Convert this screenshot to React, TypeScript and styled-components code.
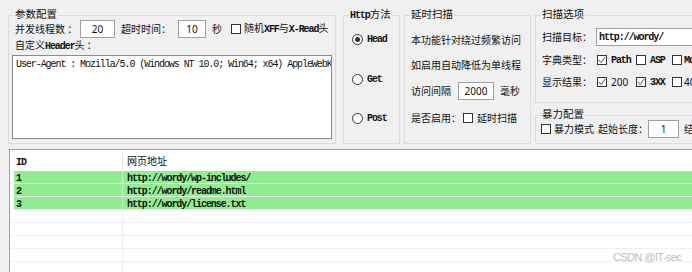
import React from 'react';
import styled, { createGlobalStyle } from 'styled-components';

const GlobalStyle = createGlobalStyle`
  html, body {
    margin: 0;
    padding: 0;
  }
  body {
    background: #f0f0f0;
    font-family: "Noto Sans CJK SC", "Noto Sans", sans-serif;
    font-size: 10px;
    color: #111;
    overflow: hidden;
  }
`;

const Window = styled.div`
  position: relative;
  width: 692px;
  height: 272px;
  overflow: hidden;
  display: flex;
  flex-direction: column;
`;

const TopPanel = styled.div`
  display: flex;
  align-items: stretch;
  height: 136px;
  padding: 8px 0 0 8px;
  flex-shrink: 0;
`;

const Group = styled.div<{ $w?: number; $h?: number; $ml?: number; $mt?: number; $pl?: number; $grow?: boolean }>`
  position: relative;
  box-sizing: border-box;
  display: flex;
  flex-direction: column;
  flex-shrink: 0;
  ${(p) => (p.$w ? `width: ${p.$w}px;` : '')}
  ${(p) => (p.$h ? `height: ${p.$h}px;` : '')}
  ${(p) => (p.$grow ? 'flex: 1;' : '')}
  margin-left: ${(p) => p.$ml ?? 0}px;
  margin-top: ${(p) => p.$mt ?? 7}px;
  padding-left: ${(p) => p.$pl ?? 6}px;
  border: 1px solid #dcdcdc;
`;

const Legend = styled.span`
  position: absolute;
  top: -8px;
  left: 5px;
  padding: 0 1px;
  background: #f0f0f0;
  font-size: 10.5px;
  line-height: 12px;
  white-space: nowrap;
`;

const Column = styled.div<{ $ml: number }>`
  display: flex;
  flex-direction: column;
  width: 170px;
  margin-left: ${(p) => p.$ml}px;
  flex-shrink: 0;
`;

const Row = styled.div<{ $mt?: number; $h?: number }>`
  display: flex;
  align-items: center;
  height: ${(p) => p.$h ?? 14}px;
  margin-top: ${(p) => p.$mt ?? 0}px;
  flex-shrink: 0;
`;

const Label = styled.span<{ $w?: number; $ml?: number }>`
  display: inline-block;
  flex-shrink: 0;
  white-space: nowrap;
  line-height: 14px;
  ${(p) => (p.$w ? `width: ${p.$w}px;` : '')}
  margin-left: ${(p) => p.$ml ?? 0}px;
`;

const Latin = styled.span`
  font-family: "Liberation Mono", monospace;
  font-size: 10px;
  font-weight: bold;
  letter-spacing: -1.07px;
`;

const Digits = styled.span`
  font-family: "Noto Sans", sans-serif;
  font-size: 10px;
`;

const TextBox = styled.input<{ $w: number; $left?: boolean; $mono?: boolean }>`
  box-sizing: border-box;
  flex-shrink: 0;
  width: ${(p) => p.$w}px;
  height: 18px;
  margin: 0;
  padding: 0 ${(p) => (p.$left ? 2 : 0)}px;
  border: 1px solid #a0a0a0;
  background: #fff;
  color: #111;
  outline: none;
  text-align: ${(p) => (p.$left ? 'left' : 'center')};
  font-family: ${(p) => (p.$mono ? '"Liberation Mono", monospace' : '"Noto Sans", sans-serif')};
  font-weight: ${(p) => (p.$mono ? 'bold' : 'normal')};
  font-size: 10px;
  letter-spacing: ${(p) => (p.$mono ? '-1.07px' : '0')};
`;

const HeaderArea = styled.textarea`
  box-sizing: border-box;
  width: 320px;
  height: 84px;
  margin: 2px 0 0 -3px;
  padding: 3px 3px;
  border: 1px solid #8c8c8c;
  background: #fff;
  color: #111;
  resize: none;
  overflow: hidden;
  white-space: pre;
  outline: none;
  font-family: "Liberation Mono", monospace;
  font-size: 10px;
  letter-spacing: -1.07px;
  line-height: 12px;
`;

const Box = styled.span<{ $ml?: number }>`
  box-sizing: border-box;
  display: inline-flex;
  align-items: center;
  justify-content: center;
  flex-shrink: 0;
  width: 10px;
  height: 10px;
  margin-left: ${(p) => p.$ml ?? 0}px;
  border: 1px solid #333;
  background: #fff;
`;

const CheckOption = styled.span<{ $w?: number }>`
  display: inline-flex;
  align-items: center;
  flex-shrink: 0;
  ${(p) => (p.$w ? `width: ${p.$w}px;` : '')}
`;

const RadioCircle = styled.span<{ $on?: boolean }>`
  box-sizing: border-box;
  display: inline-flex;
  align-items: center;
  justify-content: center;
  flex-shrink: 0;
  width: 11px;
  height: 11px;
  border-radius: 50%;
  border: 1px solid #333;
  background: #fff;

  &::after {
    content: '';
    width: 5px;
    height: 5px;
    border-radius: 50%;
    background: ${(p) => (p.$on ? '#333' : 'transparent')};
  }
`;

const Table = styled.div`
  flex: 1;
  width: 720px;
  margin: 5px 0 0 9px;
  background: #fff;
  border-top: 1px solid #a0a0a0;
  border-left: 1px solid #a0a0a0;
`;

const HeadRow = styled.div`
  display: flex;
  height: 21px;
  line-height: 21px;
`;

const HeadCell = styled.div<{ $w?: number; $pl: number }>`
  box-sizing: border-box;
  ${(p) => (p.$w ? `width: ${p.$w}px; border-right: 1px solid #e5e5e5;` : 'flex: 1;')}
  padding-left: ${(p) => p.$pl}px;
  white-space: nowrap;
`;

const DataRow = styled.div`
  box-sizing: border-box;
  display: flex;
  height: 13px;
  padding-left: 4px;
  border-bottom: 1px solid #f0f0f0;
`;

const IdCell = styled.div<{ $hit: boolean }>`
  box-sizing: border-box;
  width: 109px;
  padding-left: 2px;
  line-height: 12px;
  background: ${(p) => (p.$hit ? '#90ee90' : 'transparent')};
  border-right: 1px solid ${(p) => (p.$hit ? '#c9f3c9' : '#f0f0f0')};
`;

const UrlCell = styled.div<{ $hit: boolean }>`
  flex: 1;
  padding-left: 4px;
  line-height: 12px;
  white-space: nowrap;
  background: ${(p) => (p.$hit ? '#90ee90' : 'transparent')};
`;

const Watermark = styled.span`
  position: absolute;
  left: 613px;
  top: 250px;
  font-family: "Liberation Sans", sans-serif;
  font-size: 11px;
  letter-spacing: -0.6px;
  line-height: 14px;
  color: #bdbdbd;
`;

const CheckBox = ({ checked, ml }: { checked?: boolean; ml?: number }) => (
  <Box $ml={ml}>
    {checked && (
      <svg width="8" height="8" viewBox="0 0 8 8">
        <polyline points="0.8,4 3,6.6 7.3,1" fill="none" stroke="#555" strokeWidth="1" />
      </svg>
    )}
  </Box>
);

const results = [
  { id: '1', url: 'http://wordy/wp-includes/' },
  { id: '2', url: 'http://wordy/readme.html' },
  { id: '3', url: 'http://wordy/license.txt' },
];

const rows = [...results, null, null, null, null, null];

export default function App() {
  return (
    <Window>
      <GlobalStyle />
      <TopPanel>
        <Group $w={328}>
          <Legend>参数配置</Legend>
          <Row $mt={4} $h={18}>
            <Label $w={65}>并发线程数 ：</Label>
            <TextBox $w={35} value="20" readOnly />
            <Label $w={57} $ml={6}>超时时间：</Label>
            <TextBox $w={28} value="10" readOnly />
            <Label $w={13} $ml={6}>秒</Label>
            <CheckBox ml={6} />
            <Label $ml={3}>
              随机<Latin>XFF</Latin>与<Latin>X-Read</Latin>头
            </Label>
          </Row>
          <Row $mt={1}>
            <Label>
              自定义<Latin>Header</Latin>头 ：
            </Label>
          </Row>
          <HeaderArea
            readOnly
            wrap="off"
            value="User-Agent : Mozilla/5.0 (Windows NT 10.0; Win64; x64) AppleWebKit/537.36"
          />
        </Group>

        <Group $w={57} $ml={7} $pl={8}>
          <Legend>
            <Latin>Http</Latin>方法
          </Legend>
          <Row $mt={16}>
            <RadioCircle $on />
            <Label $ml={4}>
              <Latin>Head</Latin>
            </Label>
          </Row>
          <Row $mt={26}>
            <RadioCircle />
            <Label $ml={4}>
              <Latin>Get</Latin>
            </Label>
          </Row>
          <Row $mt={25}>
            <RadioCircle />
            <Label $ml={4}>
              <Latin>Post</Latin>
            </Label>
          </Row>
        </Group>

        <Group $w={127} $ml={4}>
          <Legend>延时扫描</Legend>
          <Row $mt={17}>
            <Label>本功能针对绕过频繁访问</Label>
          </Row>
          <Row $mt={11}>
            <Label>如启用自动降低为单线程</Label>
          </Row>
          <Row $mt={10} $h={18}>
            <Label $w={47}>访问间隔</Label>
            <TextBox $w={36} value="2000" readOnly />
            <Label $ml={6}>毫秒</Label>
          </Row>
          <Row $mt={11}>
            <Label $w={52}>是否启用：</Label>
            <CheckBox />
            <Label $ml={4}>延时扫描</Label>
          </Row>
        </Group>

        <Column $ml={4}>
          <Group $h={88}>
            <Legend>扫描选项</Legend>
            <Row $mt={12} $h={18}>
              <Label $w={54}>扫描目标：</Label>
              <TextBox $w={140} $left $mono value="http://wordy/" readOnly />
            </Row>
            <Row $mt={7}>
              <Label $w={55}>字典类型：</Label>
              <CheckOption $w={39}>
                <CheckBox checked />
                <Label $ml={4}>
                  <Latin>Path</Latin>
                </Label>
              </CheckOption>
              <CheckOption $w={36}>
                <CheckBox />
                <Label $ml={4}>
                  <Latin>ASP</Latin>
                </Label>
              </CheckOption>
              <CheckOption>
                <CheckBox />
                <Label $ml={2}>
                  <Latin>MdbBak</Latin>
                </Label>
              </CheckOption>
            </Row>
            <Row $mt={8}>
              <Label $w={55}>显示结果：</Label>
              <CheckOption $w={39}>
                <CheckBox checked />
                <Label $ml={4}>
                  <Digits>200</Digits>
                </Label>
              </CheckOption>
              <CheckOption $w={36}>
                <CheckBox checked />
                <Label $ml={4}>
                  <Latin>3XX</Latin>
                </Label>
              </CheckOption>
              <CheckOption>
                <CheckBox />
                <Label $ml={2}>
                  <Digits>403</Digits>
                </Label>
              </CheckOption>
            </Row>
          </Group>
          <Group $mt={12} $grow $pl={5}>
            <Legend>暴力配置</Legend>
            <Row $mt={4} $h={18}>
              <CheckBox />
              <Label $w={44} $ml={3}>暴力模式</Label>
              <Label $w={50}>起始长度：</Label>
              <TextBox $w={31} value="1" readOnly />
              <Label $ml={5}>结束长度：</Label>
            </Row>
          </Group>
        </Column>
      </TopPanel>

      <Table>
        <HeadRow>
          <HeadCell $w={113} $pl={6}>
            <Latin>ID</Latin>
          </HeadCell>
          <HeadCell $pl={4}>网页地址</HeadCell>
        </HeadRow>
        {rows.map((r, i) => (
          <DataRow key={i}>
            <IdCell $hit={!!r}>{r && <Latin>{r.id}</Latin>}</IdCell>
            <UrlCell $hit={!!r}>{r && <Latin>{r.url}</Latin>}</UrlCell>
          </DataRow>
        ))}
      </Table>

      <Watermark>CSDN @IT-sec</Watermark>
    </Window>
  );
}
